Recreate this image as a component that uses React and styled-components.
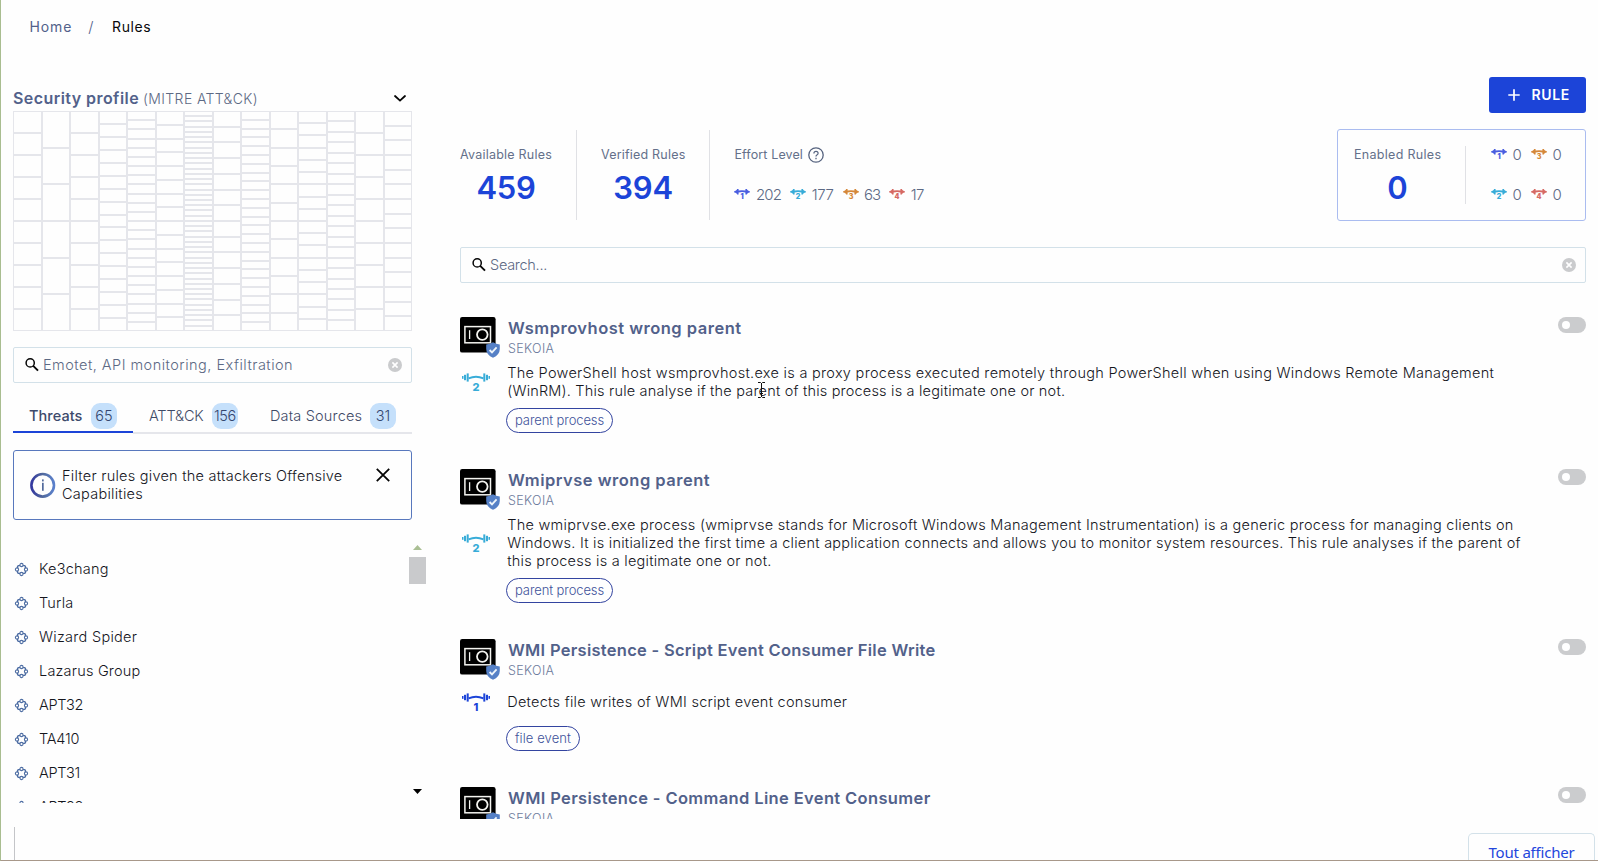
import React from "react";
import styled, { createGlobalStyle, css } from "styled-components";

const color = {
  primary: "#1c44d8",
  heading: "#52618a",
  text: "#15161d",
  muted: "#5c6984",
  line: "#e5e6eb",
  field: "#d3e1e9",
  chip: "#c5e0fb",
  grey: "#cbccce",
  page: "#fefefe",
};

const effortColors = { 1: "#4a5ee0", 2: "#38acd8", 3: "#d5883a", 4: "#d66a64" };

const GlobalStyle = createGlobalStyle`
  *, *::before, *::after { box-sizing: border-box; }
  body { margin: 0; background: ${color.page}; }
  svg { display: block; flex: none; overflow: visible; }
`;

const tracked = css`
  letter-spacing: ${(p) => p.$track || 0}px;
  white-space: nowrap;
`;

const Page = styled.div`
  display: flex;
  flex-direction: column;
  width: 1598px;
  height: 861px;
  overflow: hidden;
  background: ${color.page};
  border-left: 1px solid #a9bd90;
  border-bottom: 1px solid #a8988a;
  font-family: Inter, "Liberation Sans", sans-serif;
  font-size: 14.5px;
  font-weight: 300;
  color: ${color.text};
`;

/* Breadcrumb */
const Breadcrumb = styled.nav`
  display: flex;
  flex: none;
  align-items: center;
  height: 54px;
  padding: 0 0 2px 28.5px;
  font-size: 14px;
  font-weight: 400;
`;
const Crumb = styled.span`
  ${tracked}
  color: ${(p) => (p.$current ? "#08080c" : color.heading)};
`;
const Slash = styled.span`
  margin: 0 18.5px 0 16px;
  font-size: 15px;
  font-weight: 300;
  color: ${color.heading};
`;

const Body = styled.main`
  display: flex;
  flex: none;
  height: 765px;
`;

/* Left column */
const Sidebar = styled.aside`
  display: flex;
  flex-direction: column;
  width: 459px;
  flex: none;
  padding: 32px 0 0 12px;
`;
const SidebarInner = styled.div`
  width: 399px;
`;
const ProfileHeader = styled.div`
  display: flex;
  align-items: center;
  height: 25px;
  padding: 0 6px 1px 0;
`;
const ProfileTitle = styled.h2`
  ${tracked}
  margin: 0;
  font-size: 16px;
  font-weight: 600;
  color: ${color.heading};
`;
const ProfileNote = styled.span`
  ${tracked}
  flex: 1;
  margin-left: 4px;
  padding-top: 1px;
  font-size: 14px;
  color: ${color.muted};
`;

const Matrix = styled.div`
  display: flex;
  height: 220px;
`;
const MatrixColumn = styled.div`
  display: flex;
  flex: 1;
  flex-direction: column;
`;
const MatrixCell = styled.div`
  flex: 1;
  min-height: 0;
  border: 1px solid ${color.line};
`;

const SearchField = styled.div`
  display: flex;
  align-items: center;
  height: 36px;
  margin-top: ${(p) => p.$gap}px;
  padding: 0 9px 0 11px;
  border: 1px solid ${color.field};
  border-radius: 2px;
`;
const Placeholder = styled.span`
  ${tracked}
  flex: 1;
  margin-left: 4px;
  padding-bottom: 2px;
  color: ${color.muted};
`;

const Tabs = styled.div`
  display: flex;
  align-items: flex-start;
  margin-top: 16px;
`;
const Tab = styled.div`
  display: flex;
  flex: ${(p) => (p.$last ? "1" : "none")};
  align-items: center;
  justify-content: space-between;
  width: ${(p) => p.$width}px;
  padding: 4px 16px ${(p) => (p.$active ? 2 : 3)}px;
  border-bottom: 2px solid ${(p) => (p.$active ? color.primary : color.line)};
  font-weight: ${(p) => (p.$active ? 500 : 300)};
  color: ${(p) => (p.$active ? "#3c4a6c" : "#3e4a66")};
`;
const TabLabel = styled.span`
  ${tracked}
  padding-bottom: 2px;
`;
const TabCount = styled.span`
  ${tracked}
  width: 26px;
  height: 26px;
  border-radius: 9px;
  background: ${color.chip};
  font-weight: 300;
  line-height: 25px;
  text-align: center;
  color: #34466e;
`;

const Notice = styled.div`
  display: flex;
  align-items: center;
  height: 70px;
  margin-top: 16px;
  padding: 0 21px 0 16px;
  border: 1px solid #5878bd;
  border-radius: 3px;
`;
const NoticeText = styled.div`
  flex: 1;
  margin-left: 6px;
  line-height: 18px;
`;
const NoticeClose = styled.div`
  align-self: flex-start;
  padding-top: 17px;
`;
const Line = styled.span`
  ${tracked}
  display: block;
`;

const ThreatPane = styled.div`
  display: flex;
  width: 413px;
  height: 263px;
  margin-top: 20px;
  overflow: hidden;
`;
const ThreatList = styled.ul`
  flex: 1;
  margin: 0;
  padding: 12px 0 0 2px;
  list-style: none;
`;
const Threat = styled.li`
  display: flex;
  align-items: center;
  gap: 11px;
  height: 34px;
`;
const ThreatName = styled.span`
  ${tracked}
  padding-bottom: 2px;
`;
const Scrollbar = styled.div`
  display: flex;
  flex-direction: column;
  align-items: center;
  width: 17px;
  padding: 5px 0 9px;
`;
const ScrollThumb = styled.div`
  width: 17px;
  height: 27px;
  margin: 7px 0 auto;
  background: #c9cacc;
`;

/* Right column */
const Content = styled.section`
  display: flex;
  flex-direction: column;
  width: 1126px;
  padding-top: 23px;
`;
const AddButton = styled.button`
  display: flex;
  flex: none;
  align-items: center;
  align-self: flex-end;
  gap: 11.5px;
  width: 97px;
  height: 36px;
  padding: 0 0 0 19px;
  border: 0;
  border-radius: 3px;
  background: ${color.primary};
  font: 600 14px Inter, sans-serif;
  color: #fff;
`;
const ButtonLabel = styled.span`
  ${tracked}
  padding-bottom: 1px;
`;

const Summary = styled.div`
  display: flex;
  align-items: center;
  justify-content: space-between;
  flex: none;
  height: 92px;
  margin-top: 16px;
`;
const StatGroup = styled.div`
  display: flex;
  height: 90px;
`;
const Stat = styled.div`
  padding: 15px 24px 0 ${(p) => (p.$first ? 0 : 24)}px;
  border-right: ${(p) => (p.$open ? 0 : 1)}px solid #e0e1e5;
`;
const StatLabel = styled.div`
  ${tracked}
  display: flex;
  align-items: center;
  gap: 5px;
  height: 19px;
  font-size: 12.5px;
  font-weight: 400;
  color: #64708a;
`;
const StatValue = styled.div`
  ${tracked}
  margin-top: 6px;
  font-size: 31px;
  font-weight: 600;
  line-height: 36px;
  text-align: center;
  color: ${color.primary};
`;
const EffortRow = styled.div`
  display: flex;
  gap: 9px;
  margin-top: 20px;
`;
const EffortCount = styled.div`
  display: flex;
  align-items: center;
  gap: 5.5px;
  height: 20px;
  font-size: 15px;
  color: ${color.muted};
`;
const CountValue = styled.span`
  ${tracked}
`;
const EnabledCard = styled.div`
  display: flex;
  width: 249px;
  height: 92px;
  padding-left: 16px;
  border: 1px solid #aabcf0;
  border-radius: 3px;
`;
const EnabledStat = styled.div`
  width: 111px;
  padding: 15px 24px 0 0;
`;
const EnabledGrid = styled.div`
  display: grid;
  grid-template-columns: 30px 30px;
  gap: 20px 10px;
  align-content: center;
  align-self: center;
  height: 58px;
  padding: 0 0 2px 25px;
  border-left: 1px solid #e0e1e5;
`;

const RuleList = styled.div`
  flex: 1;
  min-height: 0;
  margin-top: 34px;
  overflow: hidden;
`;
const Rule = styled.article`
  display: grid;
  grid-template-columns: 48px 1fr auto;
  margin-bottom: 36px;
`;
const LogoBox = styled.div`
  position: relative;
  width: 36px;
  height: 35px;
`;
const ShieldBadge = styled.div`
  position: absolute;
  left: 26px;
  top: 25px;
`;
const RuleTitle = styled.h3`
  ${tracked}
  margin: 0;
  font-size: 16.5px;
  font-weight: 600;
  line-height: 22px;
  color: ${color.heading};
`;
const RuleSource = styled.div`
  ${tracked}
  margin-top: 1px;
  font-size: 12.5px;
  line-height: 17px;
  color: #6c7b9c;
`;
const Toggle = styled.div`
  display: flex;
  align-items: center;
  width: 28px;
  height: 16px;
  padding-left: 4px;
  border-radius: 8px;
  background: ${color.grey};

  &::before {
    content: "";
    width: 8px;
    height: 8px;
    border-radius: 50%;
    background: #fff;
  }
`;
const EffortCell = styled.div`
  display: flex;
  align-items: center;
  margin-top: 6px;
  padding-left: 2px;
`;
const Description = styled.div`
  display: flex;
  flex-direction: column;
  justify-content: center;
  grid-column: 2 / 4;
  min-height: 32px;
  margin: 7px 0 0 -0.8px;
  line-height: 18px;
`;
const Tag = styled.span`
  ${tracked}
  grid-column: 2;
  justify-self: start;
  height: 25px;
  margin: 8px 0 0 -2px;
  padding: 0 8px;
  border: 1px solid #3344a0;
  border-radius: 13px;
  font-size: 13px;
  line-height: 23px;
  color: #40529a;
`;
const Pointer = styled.div`
  position: absolute;
  left: 757px;
  top: 382px;
`;

/* Bottom strip */
const Footer = styled.footer`
  display: flex;
  align-items: flex-end;
  justify-content: flex-end;
  height: 33px;
  margin: 8px 3px 0 13px;
  border-left: 1px solid #c4c5c8;
`;
const ShowAll = styled.div`
  ${tracked}
  width: 127px;
  height: 27px;
  border: 1px solid ${color.field};
  border-bottom: 0;
  border-radius: 5px 5px 0 0;
  font: 400 15px/37px "Noto Sans", sans-serif;
  text-align: center;
  color: #2346dc;
`;

function EffortIcon({ level, tint }) {
  const c = tint || effortColors[level];
  return (
    <svg width="28" height="18" viewBox="0 0 28 18">
      <g fill={c}>
        <rect x="0" y="3" width="1.5" height="2.8" />
        <rect x="2" y="1.8" width="2.1" height="5.4" />
        <rect x="4.7" y="0.4" width="2" height="8.2" />
        <rect x="26.5" y="3" width="1.5" height="2.8" />
        <rect x="23.9" y="1.8" width="2.1" height="5.4" />
        <rect x="21.3" y="0.4" width="2" height="8.2" />
      </g>
      <path d="M6.6 5.4 Q14 2.2 21.4 5.4" fill="none" stroke={c} strokeWidth="2" />
      <text x="14" y="17.5" textAnchor="middle" fontFamily="Inter, sans-serif" fontWeight="800" fontSize="11" fill={c}>
        {level}
      </text>
    </svg>
  );
}

function SmallEffortIcon({ level }) {
  const c = effortColors[level];
  return (
    <svg width="16" height="11" viewBox="0 0 16 11">
      <path
        d="M0 2.4 L2 1.6 L3 .6 V0 H4.6 V1.6 Q8 .8 11.4 1.6 V0 H13 V.6 L14 1.6 L16 2.4 V3.2 L14 4 L13 5 V5.6 H11.4 V3.6 Q8 2.6 4.6 3.6 V5.6 H3 V5 L2 4 L0 3.2 Z"
        fill={c}
      />
      <text x="8" y="10.2" textAnchor="middle" fontFamily="Inter, sans-serif" fontWeight="900" fontSize="7" fill={c}>
        {level}
      </text>
    </svg>
  );
}

const SearchIcon = () => (
  <svg width="14" height="14" viewBox="0 0 14 14" fill="none" stroke="#050505">
    <circle cx="5.2" cy="4.9" r="4.1" strokeWidth="1.5" />
    <path d="M8.2 7.9 L13 12.7" strokeWidth="1.9" />
  </svg>
);

const ClearIcon = () => (
  <svg width="14" height="14" viewBox="0 0 14 14">
    <circle cx="7" cy="7" r="7" fill="#cacbcd" />
    <path d="M4.4 4.4 L9.6 9.6 M9.6 4.4 L4.4 9.6" stroke="#fff" strokeWidth="1.6" />
  </svg>
);

const ChevronIcon = () => (
  <svg width="12" height="8" viewBox="0 0 12 8" fill="none" stroke="#050505" strokeWidth="1.8">
    <path d="M1 2 L6 6.6 L11 2" strokeLinecap="round" />
  </svg>
);

const InfoIcon = () => (
  <svg width="26" height="26" viewBox="0 0 26 26">
    <defs>
      <linearGradient id="infoRing" x1="0" x2="1">
        <stop offset="0" stopColor="#3338a0" />
        <stop offset="0.5" stopColor="#526a9c" />
        <stop offset="1" stopColor="#5a80cc" />
      </linearGradient>
    </defs>
    <circle cx="12.7" cy="13.3" r="11.3" fill="none" stroke="url(#infoRing)" strokeWidth="2.6" />
    <rect x="12" y="7.4" width="1.7" height="2" fill="#526a9c" />
    <rect x="12" y="10.8" width="1.7" height="8" fill="#526a9c" />
  </svg>
);

const CloseIcon = () => (
  <svg width="14" height="14" viewBox="0 0 14 14" stroke="#050505" strokeWidth="1.8">
    <path d="M.8 .8 L13.2 13.2 M13.2 .8 L.8 13.2" />
  </svg>
);

const ThreatIcon = () => (
  <svg width="13" height="13" viewBox="0 0 13 13" fill="none" stroke="#4d6da3">
    <path d="M3.4 2.6 L9.6 2.6 L10.4 3.4 V9.6 L9.6 10.4 H3.4 L2.6 9.6 V3.4 Z" strokeWidth="1.4" />
    <g fill={color.page} strokeWidth="1.1">
      <circle cx="6.5" cy="2" r="1.6" />
      <circle cx="11" cy="6.5" r="1.6" />
      <circle cx="6.5" cy="11" r="1.6" />
      <circle cx="2" cy="6.5" r="1.6" />
    </g>
  </svg>
);

const HelpIcon = () => (
  <svg width="16" height="16" viewBox="0 0 16 16" fill="none" stroke="#56637f">
    <circle cx="8" cy="8" r="7.2" strokeWidth="1.3" />
    <path d="M5.9 6.4 Q5.9 4.4 8 4.4 Q10.1 4.4 10.1 6.3 Q10.1 7.4 8.9 8 Q8 8.5 8 9.6" strokeWidth="1.2" />
    <path d="M8 10.8 V12.2" strokeWidth="1.3" />
  </svg>
);

const PlusIcon = () => (
  <svg width="12" height="12" viewBox="0 0 12 12" stroke="#fff" strokeWidth="1.7">
    <path d="M6 .3 V11.7 M.3 6 H11.7" />
  </svg>
);

const LogoIcon = () => (
  <svg width="36" height="36" viewBox="0 0 36 36">
    <rect width="35.6" height="35.6" rx="2.2" fill="#000" />
    <g fill="none" stroke="#f4f4f0">
      <rect x="4.9" y="9.6" width="25.6" height="16.2" strokeWidth="1.5" />
      <path d="M9.6 13.2 V22" strokeWidth="1.3" />
      <circle cx="22.3" cy="17.6" r="5.3" strokeWidth="1.8" />
    </g>
  </svg>
);

const ShieldIcon = () => (
  <svg width="14" height="16" viewBox="0 0 14 16">
    <path d="M7 .2 Q10 2.2 13.8 2.4 V7 Q13.6 13 7 15.8 Q.4 13 .2 7 V2.4 Q4 2.2 7 .2 Z" fill="#5580c6" />
    <path d="M3.6 8 L6 10.4 L10.6 5.4" fill="none" stroke="#eef5fb" strokeWidth="1.8" />
  </svg>
);

const ArrowIcon = ({ down }) => (
  <svg width="9" height="5" viewBox="0 0 9 5">
    <path d={down ? "M0 0 H9 L4.5 5 Z" : "M0 5 H9 L4.5 0 Z"} fill={down ? "#000" : "#aabf94"} />
  </svg>
);

const TextCursor = () => (
  <svg width="8" height="16" viewBox="0 0 8 16" fill="none" stroke="#111">
    <path d="M1 .5 H3.5 L4.5 1.5 L5.5 .5 H8 M4.5 1 V15 M1 15.5 H3.5 L4.5 14.5 L5.5 15.5 H8 M3 11.5 H6" />
  </svg>
);

const matrixRows = [10, 6, 10, 17, 24, 16, 42, 14, 25, 12, 18, 21, 10, 15];

const tabs = [
  { label: "Threats", count: "65", width: 120, active: true, track: 0.05 },
  { label: "ATT&CK", count: "156", width: 121, track: -0.16, countTrack: -0.35 },
  { label: "Data Sources", count: "31", width: 158, last: true, track: 0.18 },
];

const threats = [
  ["Ke3chang", 0.22],
  ["Turla", 0.2],
  ["Wizard Spider", 0.28],
  ["Lazarus Group", 0.2],
  ["APT32", -0.35],
  ["TA410", -0.2],
  ["APT31", -0.35],
  ["APT28", -0.35],
];

const rules = [
  {
    title: "Wsmprovhost wrong parent",
    track: 0.49,
    level: 2,
    tag: "parent process",
    tagTrack: -0.1,
    lines: [
      ["The PowerShell host wsmprovhost.exe is a proxy process executed remotely through PowerShell when using Windows Remote Management", 0.294],
      ["(WinRM). This rule analyse if the parent of this process is a legitimate one or not.", 0.191],
    ],
  },
  {
    title: "Wmiprvse wrong parent",
    track: 0.5,
    level: 2,
    tag: "parent process",
    tagTrack: -0.1,
    lines: [
      ["The wmiprvse.exe process (wmiprvse stands for Microsoft Windows Management Instrumentation) is a generic process for managing clients on", 0.267],
      ["Windows. It is initialized the first time a client application connects and allows you to monitor system resources. This rule analyses if the parent of", 0.246],
      ["this process is a legitimate one or not.", 0.245],
    ],
  },
  {
    title: "WMI Persistence - Script Event Consumer File Write",
    track: 0.28,
    level: 1,
    tag: "file event",
    tagTrack: 0.09,
    lines: [["Detects file writes of WMI script event consumer", 0.27]],
  },
  {
    title: "WMI Persistence - Command Line Event Consumer",
    track: 0.36,
  },
];

const Effort = ({ level, value, track }) => (
  <EffortCount>
    <SmallEffortIcon level={level} />
    <CountValue $track={track}>{value}</CountValue>
  </EffortCount>
);

export default function App() {
  return (
    <Page>
      <GlobalStyle />
      <Breadcrumb>
        <Crumb $track={0.9}>Home</Crumb>
        <Slash>/</Slash>
        <Crumb $current $track={0.6}>Rules</Crumb>
      </Breadcrumb>

      <Body>
        <Sidebar>
          <SidebarInner>
            <ProfileHeader>
              <ProfileTitle $track={0.44}>Security profile</ProfileTitle>
              <ProfileNote $track={0.38}>(MITRE ATT&amp;CK)</ProfileNote>
              <ChevronIcon />
            </ProfileHeader>

            <Matrix>
              {matrixRows.map((rows, column) => (
                <MatrixColumn key={column}>
                  {Array.from({ length: rows }, (_, row) => (
                    <MatrixCell key={row} />
                  ))}
                </MatrixColumn>
              ))}
            </Matrix>

            <SearchField $gap={16}>
              <SearchIcon />
              <Placeholder $track={0.48}>Emotet, API monitoring, Exfiltration</Placeholder>
              <ClearIcon />
            </SearchField>

            <Tabs>
              {tabs.map((tab) => (
                <Tab key={tab.label} $width={tab.width} $active={tab.active} $last={tab.last}>
                  <TabLabel $track={tab.track}>{tab.label}</TabLabel>
                  <TabCount $track={tab.countTrack}>{tab.count}</TabCount>
                </Tab>
              ))}
            </Tabs>

            <Notice>
              <InfoIcon />
              <NoticeText>
                <Line $track={0.25}>Filter rules given the attackers Offensive</Line>
                <Line $track={0.263}>Capabilities</Line>
              </NoticeText>
              <NoticeClose>
                <CloseIcon />
              </NoticeClose>
            </Notice>
          </SidebarInner>

          <ThreatPane>
            <ThreatList>
              {threats.map(([name, track]) => (
                <Threat key={name}>
                  <ThreatIcon />
                  <ThreatName $track={track}>{name}</ThreatName>
                </Threat>
              ))}
            </ThreatList>
            <Scrollbar>
              <ArrowIcon />
              <ScrollThumb />
              <ArrowIcon down />
            </Scrollbar>
          </ThreatPane>
        </Sidebar>

        <Content>
          <AddButton>
            <PlusIcon />
            <ButtonLabel $track={0.6}>RULE</ButtonLabel>
          </AddButton>

          <Summary>
            <StatGroup>
              <Stat $first>
                <StatLabel $track={0.22}>Available Rules</StatLabel>
                <StatValue $track={-0.3}>459</StatValue>
              </Stat>
              <Stat>
                <StatLabel $track={0.2}>Verified Rules</StatLabel>
                <StatValue $track={-0.1}>394</StatValue>
              </Stat>
              <Stat $open>
                <StatLabel $track={0.12}>
                  Effort Level <HelpIcon />
                </StatLabel>
                <EffortRow>
                  <Effort level={1} value="202" track={-0.8} />
                  <Effort level={2} value="177" track={-0.4} />
                  <Effort level={3} value="63" track={-1} />
                  <Effort level={4} value="17" track={-0.6} />
                </EffortRow>
              </Stat>
            </StatGroup>

            <EnabledCard>
              <EnabledStat>
                <StatLabel $track={0.3}>Enabled Rules</StatLabel>
                <StatValue>0</StatValue>
              </EnabledStat>
              <EnabledGrid>
                <Effort level={1} value="0" />
                <Effort level={3} value="0" />
                <Effort level={2} value="0" />
                <Effort level={4} value="0" />
              </EnabledGrid>
            </EnabledCard>
          </Summary>

          <SearchField $gap={26}>
            <SearchIcon />
            <Placeholder $track={-0.28}>Search...</Placeholder>
            <ClearIcon />
          </SearchField>

          <RuleList>
            {rules.map((rule) => (
              <Rule key={rule.title}>
                <LogoBox>
                  <LogoIcon />
                  <ShieldBadge>
                    <ShieldIcon />
                  </ShieldBadge>
                </LogoBox>
                <div>
                  <RuleTitle $track={rule.track}>{rule.title}</RuleTitle>
                  <RuleSource $track={0.35}>SEKOIA</RuleSource>
                </div>
                <Toggle />
                {rule.lines && (
                  <>
                    <EffortCell>
                      <EffortIcon level={rule.level} tint={rule.level === 1 ? color.primary : undefined} />
                    </EffortCell>
                    <Description>
                      {rule.lines.map(([text, track]) => (
                        <Line key={text} $track={track}>{text}</Line>
                      ))}
                    </Description>
                    <Tag $track={rule.tagTrack}>{rule.tag}</Tag>
                  </>
                )}
              </Rule>
            ))}
          </RuleList>
        </Content>
      </Body>

      <Footer>
        <ShowAll $track={-0.2}>Tout afficher</ShowAll>
      </Footer>
      <Pointer>
        <TextCursor />
      </Pointer>
    </Page>
  );
}
